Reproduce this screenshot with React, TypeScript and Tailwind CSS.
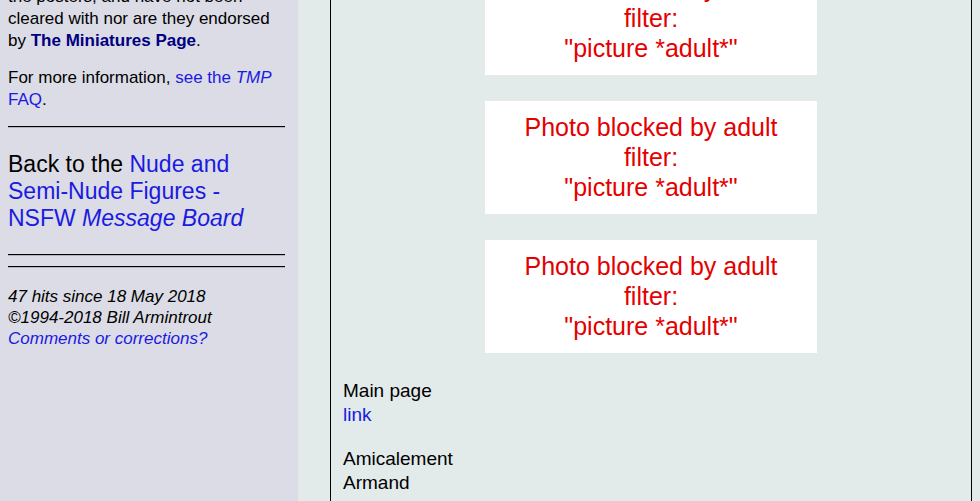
import React from "react";

const Hr = () => (
  <div className="border-t border-t-black border-b border-b-[#b4b4bc] mr-[13px]" />
);

const Blocked = () => (
  <div className="w-[332px] h-[113px] bg-white flex flex-col items-center pt-[11px] text-[25px] leading-[30px] text-[#e40000] text-center">
    <div>Photo blocked by adult</div>
    <div>filter:</div>
    <div>"picture *adult*"</div>
  </div>
);

export default function App() {
  return (
    <div
      className="w-[980px] h-[501px] overflow-hidden flex bg-[#e2eaea] text-black"
      style={{ fontFamily: '"Liberation Sans", Arial, sans-serif' }}
    >
      <div className="w-[298px] shrink-0 bg-[#dcdce6] pl-[8px] h-full">
        <div className="-mt-[14px] text-[17px] leading-[22px] pr-[13px]">
          <p>
            the posters, and have not been cleared with nor are they endorsed by{" "}
            <b className="text-[#000080]">The Miniatures Page</b>.
          </p>
          <p className="mt-[15px]">
            For more information,{" "}
            <span className="text-[#1a1ae0]">
              see the <i>TMP</i> FAQ
            </span>
            .
          </p>
        </div>
        <div className="mt-[15px]">
          <Hr />
        </div>
        <div className="mt-[23px] text-[23px] leading-[27px] pr-[13px]">
          Back to the{" "}
          <span className="text-[#1a1ae0]">
            Nude and Semi-Nude Figures - NSFW <i>Message Board</i>
          </span>
        </div>
        <div className="mt-[22px]">
          <Hr />
        </div>
        <div className="mt-[10px]">
          <Hr />
        </div>
        <div className="mt-[18px] text-[17px] leading-[21px] italic">
          <div>47 hits since 18 May 2018</div>
          <div>©1994-2018 Bill Armintrout</div>
          <div className="text-[#1a1ae0]">Comments or corrections?</div>
        </div>
      </div>
      <div className="ml-[32px] w-[642px] shrink-0 border-l border-r border-black h-full">
        <div className="-mt-[38px] flex flex-col items-center gap-[26px]">
          <Blocked />
          <Blocked />
          <Blocked />
        </div>
        <div className="pl-[12px] mt-[26px] text-[19px] leading-[24px]">
          <div>Main page</div>
          <div className="text-[#1a1ae0]">link</div>
          <div className="mt-[20px]">Amicalement</div>
          <div>Armand</div>
        </div>
      </div>
    </div>
  );
}
